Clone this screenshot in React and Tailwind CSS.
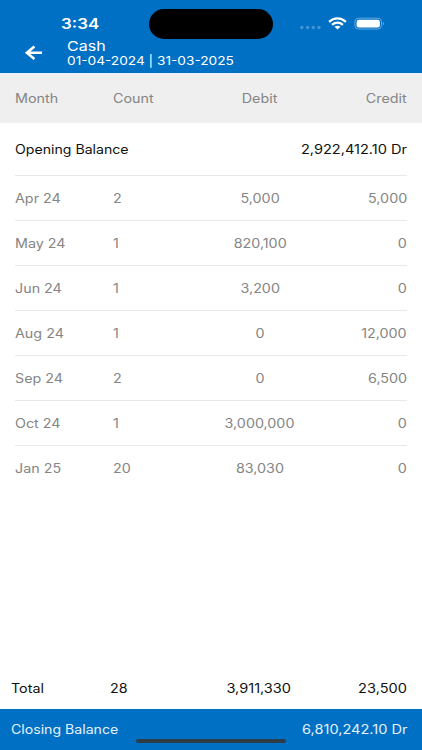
import clsx from 'clsx';

const rows = [
  { month: 'Apr 24', count: '2', debit: '5,000', credit: '5,000' },
  { month: 'May 24', count: '1', debit: '820,100', credit: '0' },
  { month: 'Jun 24', count: '1', debit: '3,200', credit: '0' },
  { month: 'Aug 24', count: '1', debit: '0', credit: '12,000' },
  { month: 'Sep 24', count: '2', debit: '0', credit: '6,500' },
  { month: 'Oct 24', count: '1', debit: '3,000,000', credit: '0' },
  { month: 'Jan 25', count: '20', debit: '83,030', credit: '0' },
];

const origins = {
  left: 'origin-left justify-self-start',
  center: 'origin-center justify-self-center',
  right: 'origin-right justify-self-end',
};

const stretches = {
  tight: 'scale-x-[1.13]',
  normal: 'scale-x-[1.145]',
  wide: 'scale-x-[1.165]',
  wider: 'scale-x-[1.19]',
};

// Slightly extended lettering, anchored on the side it is aligned to
const Label = ({ align = 'left', stretch = 'normal', className, children }) => (
  <span className={clsx('inline-block whitespace-nowrap', stretches[stretch], origins[align], className)}>
    {children}
  </span>
);

const Cells = ({ month, count, debit, credit, stretch }) => (
  <>
    <Label>{month}</Label>
    <Label>{count}</Label>
    <Label align="center" stretch={stretch}>{debit}</Label>
    <Label align="right" stretch={stretch}>{credit}</Label>
  </>
);

const StatusIcons = () => (
  <svg className="absolute left-[298px] top-[16px]" width="90" height="16" viewBox="0 0 90 16" fill="none">
    {/* Signal */}
    <g fill="#4295d5">
      <circle cx="3.8" cy="11.5" r="1.7" />
      <circle cx="9.6" cy="11.5" r="1.7" />
      <circle cx="15.3" cy="11.5" r="1.7" />
      <circle cx="21" cy="11.5" r="1.7" />
    </g>
    {/* Wifi */}
    <g stroke="#fff" strokeWidth="2.3">
      <path d="M31.1 5.9C36 1.1 43 1.1 47.9 5.9" />
      <path d="M34.1 8.9C37.3 6 41.7 6 44.9 8.9" />
    </g>
    <path d="M39.5 13.5l-3-2.8c1.6-1.4 4.4-1.4 6 0z" fill="#fff" />
    {/* Battery */}
    <rect x="56.9" y="2.2" width="26.6" height="10.8" rx="3.5" stroke="#66aadd" />
    <rect x="58.6" y="3.7" width="23.3" height="7.8" rx="2.2" fill="#fff" />
    <path d="M84.8 5.8c1.5.5 1.5 3.1 0 3.6z" fill="#66aadd" />
  </svg>
);

const Header = () => (
  <header className="relative h-[72.5px] shrink-0 bg-[#0070c4] text-white">
    <div className="flex h-[38px] items-end pl-[61px]">
      <Label stretch="wide" className="mb-[5px] text-[14.5px] leading-[18px] font-semibold">3:34</Label>
    </div>
    <div className="absolute left-[149px] top-[9px] h-[30px] w-[123.5px] rounded-full bg-black" />
    <StatusIcons />
    <div className="flex">
      <button className="ml-[24px] mt-[7px] h-[16px] w-[20px]" aria-label="Back">
        <svg width="20" height="16" viewBox="0 0 20 16" fill="none" stroke="#fff" strokeWidth="2.6">
          <path d="M18 7.8H3M10.4 1.6L2.9 7.8l7.5 6.2" />
        </svg>
      </button>
      <div className="ml-[23px] flex flex-col items-start">
        <Label stretch="wider" className="text-[13.5px] leading-[16px]">Cash</Label>
        <Label stretch="wider" className="text-[11.5px] leading-[14px]">01-04-2024 | 31-03-2025</Label>
      </div>
    </div>
  </header>
);

export default function App() {
  return (
    <div className="flex h-[750px] w-[422px] flex-col overflow-hidden bg-white font-['Inter',sans-serif] text-[12.5px] leading-[16px] text-[#858585]">
      <Header />

      <div className="grid h-[50.5px] shrink-0 grid-cols-4 items-center bg-[#efefef] px-[15px] pt-[2px]">
        <Cells month="Month" count="Count" debit="Debit" credit="Credit" />
      </div>

      <main className="flex-1 px-[15px]">
        <div className="flex h-[52px] items-center justify-between pt-[2px] text-[#111]">
          <Label stretch="tight">Opening Balance</Label>
          <Label align="right" stretch="wide">2,922,412.10 Dr</Label>
        </div>
        {rows.map((row) => (
          <div key={row.month} className="grid h-[45px] grid-cols-4 items-center border-t border-[#e8e8e8] pt-[2px]">
            <Cells {...row} />
          </div>
        ))}
      </main>

      <div className="grid h-[41px] shrink-0 grid-cols-4 items-center pl-[11px] pr-[15px] text-[#111]">
        <Cells month="Total" count="28" debit="3,911,330" credit="23,500" stretch="wide" />
      </div>

      <footer className="relative flex h-[41px] shrink-0 items-center justify-between bg-[#0070c4] pl-[11px] pr-[15px] text-[#e5f1fa]">
        <Label stretch="tight">Closing Balance</Label>
        <Label align="right" stretch="wide">6,810,242.10 Dr</Label>
        <div className="absolute left-[136px] top-[30px] h-[4px] w-[150px] rounded-full bg-[#2e3c48]" />
      </footer>
    </div>
  );
}
